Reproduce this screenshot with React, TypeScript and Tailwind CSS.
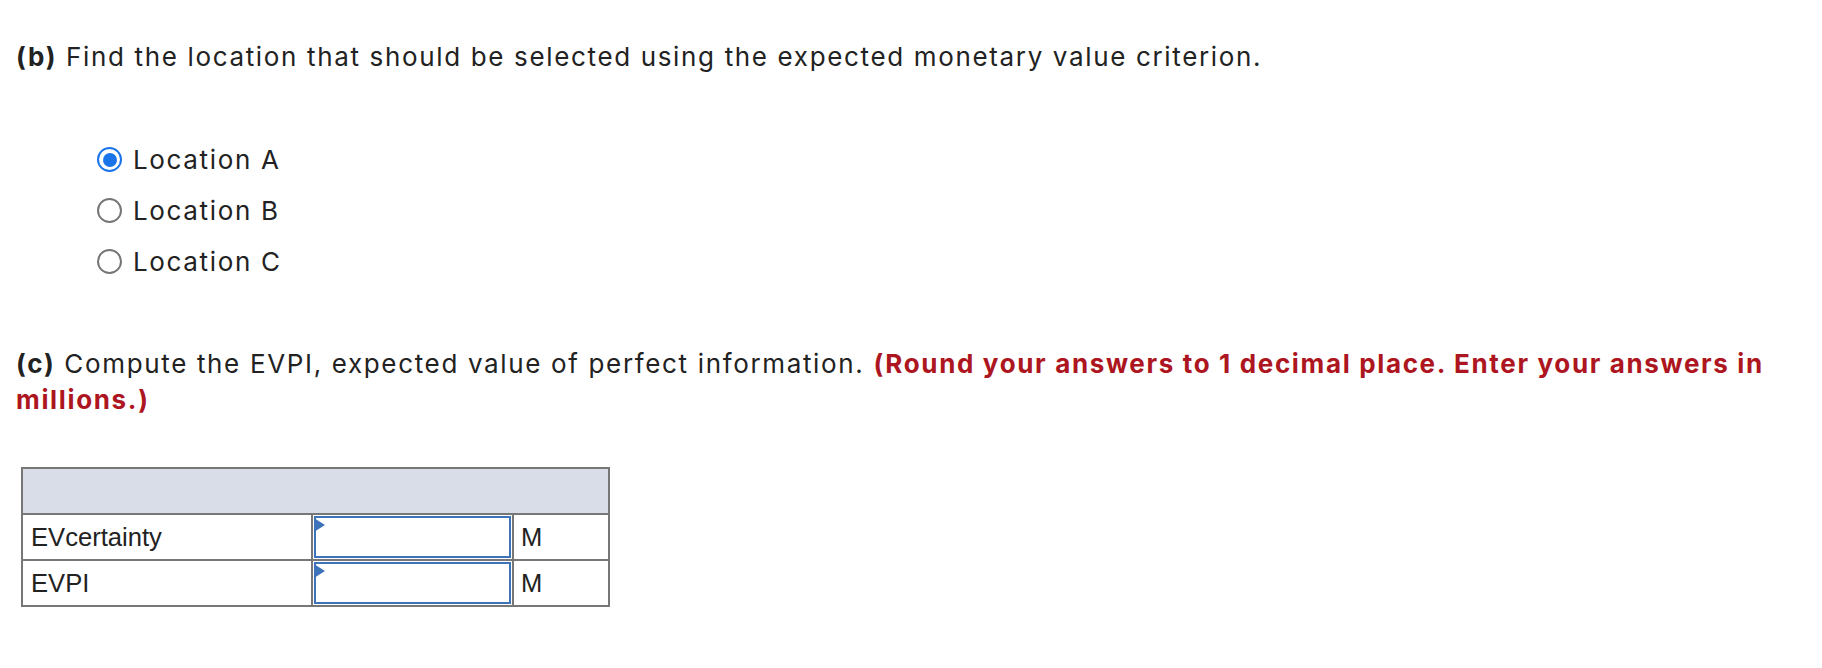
const options = ["Location A", "Location B", "Location C"];

const rows = ["EVcertainty", "EVPI"];

function Radio({ checked }: Readonly<{ checked: boolean }>) {
  if (checked) {
    return (
      <span className="flex h-[25px] w-[25px] shrink-0 items-center justify-center rounded-full border-[2.5px] border-[#1a73e8] bg-white">
        <span className="h-[14px] w-[14px] rounded-full bg-[#1a73e8]" />
      </span>
    );
  }
  return <span className="h-[25px] w-[25px] shrink-0 rounded-full border-2 border-[#767676] bg-white" />;
}

function AnswerInput() {
  return (
    <div className="relative m-[1px] h-[calc(100%-2px)] border-2 border-[#3d74b9] bg-white">
      <svg className="absolute -left-[2px] top-0" width="11" height="14" viewBox="0 0 11 14">
        <polygon points="0,0 11,7 0,14" fill="#3d74b9" />
      </svg>
    </div>
  );
}

export default function App() {
  return (
    <div className="min-h-[668px] bg-white px-4 pt-[39px] font-['Inter',sans-serif] text-[26px] tracking-[1.65px] text-[#222]">
      <p className="leading-[36px]">
        <b>(b)</b> Find the location that should be selected using the expected monetary value criterion.
      </p>

      <div className="mt-[59px] flex flex-col pl-[81px]">
        {options.map((opt, i) => (
          <label key={opt} className="flex h-[51px] items-center gap-[11px]">
            <Radio checked={i === 0} />
            <span>{opt}</span>
          </label>
        ))}
      </div>

      <p className="mt-[59px] leading-[36px]">
        <b>(c)</b> Compute the EVPI, expected value of perfect information.{" "}
        <b className="text-[#ad1620]">
          (Round your answers to 1 decimal place. Enter your answers in millions.)
        </b>
      </p>

      {/* Table */}
      <div className="ml-[5px] mt-[49px] w-[589px] border-2 border-[#777] font-['Liberation_Sans',Arial,sans-serif] text-[25.6px] tracking-normal text-[#222]">
        <div className="h-[46px] border-b-2 border-[#777] bg-[#d9dde7]" />
        {rows.map((label, i) => (
          <div
            key={label}
            className={`flex ${i < rows.length - 1 ? "h-[46px] border-b-2 border-[#777]" : "h-[44px]"}`}
          >
            <div className="flex w-[290px] items-center border-r-2 border-[#777] px-2">{label}</div>
            <div className="w-[201px] border-r-2 border-[#777]">
              <AnswerInput />
            </div>
            <div className="flex flex-1 items-center px-[7px]">M</div>
          </div>
        ))}
      </div>
    </div>
  );
}
